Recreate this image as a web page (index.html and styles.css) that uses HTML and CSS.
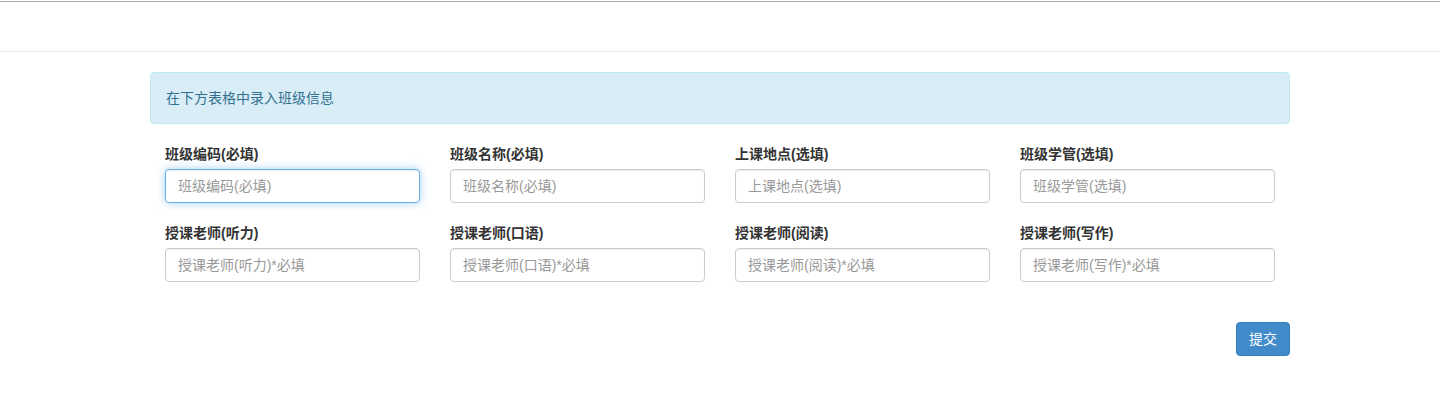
FILE: index.html
```html
<!DOCTYPE html>
<html lang="zh-CN">
<head>
    <meta charset="UTF-8"/>
    <meta content="width=device-width, initial-scale=1" name="viewport"/>
    <title>录入班级信息</title>
    <link rel="stylesheet" href="styles.css">
</head>
<body>

<div class="navbar"></div>

<div class="container">
    <div class="alert">在下方表格中录入班级信息</div>

    <form id="classForm">
        <div class="form-row">
            <div class="form-group">
                <label for="code">班级编码(必填)</label>
                <input class="form-control focus" id="code" placeholder="班级编码(必填)" type="text"/>
            </div>
            <div class="form-group">
                <label for="name">班级名称(必填)</label>
                <input class="form-control" id="name" placeholder="班级名称(必填)" type="text"/>
            </div>
            <div class="form-group">
                <label for="place">上课地点(选填)</label>
                <input class="form-control" id="place" placeholder="上课地点(选填)" type="text"/>
            </div>
            <div class="form-group">
                <label for="manager">班级学管(选填)</label>
                <input class="form-control" id="manager" placeholder="班级学管(选填)" type="text"/>
            </div>
        </div>
        <div class="form-row">
            <div class="form-group">
                <label for="listening">授课老师(听力)</label>
                <input class="form-control" id="listening" placeholder="授课老师(听力)*必填" type="text"/>
            </div>
            <div class="form-group">
                <label for="speaking">授课老师(口语)</label>
                <input class="form-control" id="speaking" placeholder="授课老师(口语)*必填" type="text"/>
            </div>
            <div class="form-group">
                <label for="reading">授课老师(阅读)</label>
                <input class="form-control" id="reading" placeholder="授课老师(阅读)*必填" type="text"/>
            </div>
            <div class="form-group">
                <label for="writing">授课老师(写作)</label>
                <input class="form-control" id="writing" placeholder="授课老师(写作)*必填" type="text"/>
            </div>
        </div>
        <div class="actions">
            <button class="btn-primary" type="submit">提交</button>
        </div>
    </form>
</div>

</body>
</html>
```

FILE: styles.css
```css
body {
  margin: 0;
  font-family: "Liberation Sans", "Noto Sans CJK SC", sans-serif;
  font-size: 14px;
  line-height: 20px;
  color: #333;
  background: #fff;
}
.navbar {
  margin-top: 1px;
  height: 49px;
  border-top: 1px solid #aaa;
  border-bottom: 1px solid #e7e7e7;
  margin-bottom: 20px;
}
.container {
  width: 1140px;
  margin: 0 auto;
}
.alert {
  padding: 15px;
  margin-bottom: 20px;
  border: 1px solid #bce8f1;
  border-radius: 4px;
  background-color: #d9edf7;
  color: #31708f;
}
.form-row {
  display: flex;
}
.form-group {
  width: 285px;
  padding: 0 15px;
  box-sizing: border-box;
  margin-bottom: 20px;
}
label {
  display: block;
  margin-bottom: 5px;
  font-weight: bold;
  color: #333;
}
.form-control {
  display: block;
  width: 100%;
  height: 34px;
  padding: 6px 12px;
  box-sizing: border-box;
  font-family: inherit;
  font-size: 14px;
  line-height: 20px;
  color: #555;
  border: 1px solid #ccc;
  border-radius: 4px;
  box-shadow: inset 0 1px 1px rgba(0,0,0,0.075);
  outline: none;
}
.form-control::placeholder {
  color: #999;
}
.form-control.focus,
.form-control:focus {
  border-color: #66afe9;
  box-shadow: inset 0 1px 1px rgba(0,0,0,0.075), 0 0 8px rgba(102,175,233,0.6);
}
.actions {
  display: flex;
  justify-content: flex-end;
  padding-top: 20px;
}
.btn-primary {
  height: 34px;
  padding: 6px 12px;
  font-family: inherit;
  font-size: 14px;
  line-height: 20px;
  color: #fff;
  background-color: #428bca;
  border: 1px solid #357ebd;
  border-radius: 4px;
  cursor: pointer;
}
.btn-primary:hover {
  background-color: #3276b1;
}
```
